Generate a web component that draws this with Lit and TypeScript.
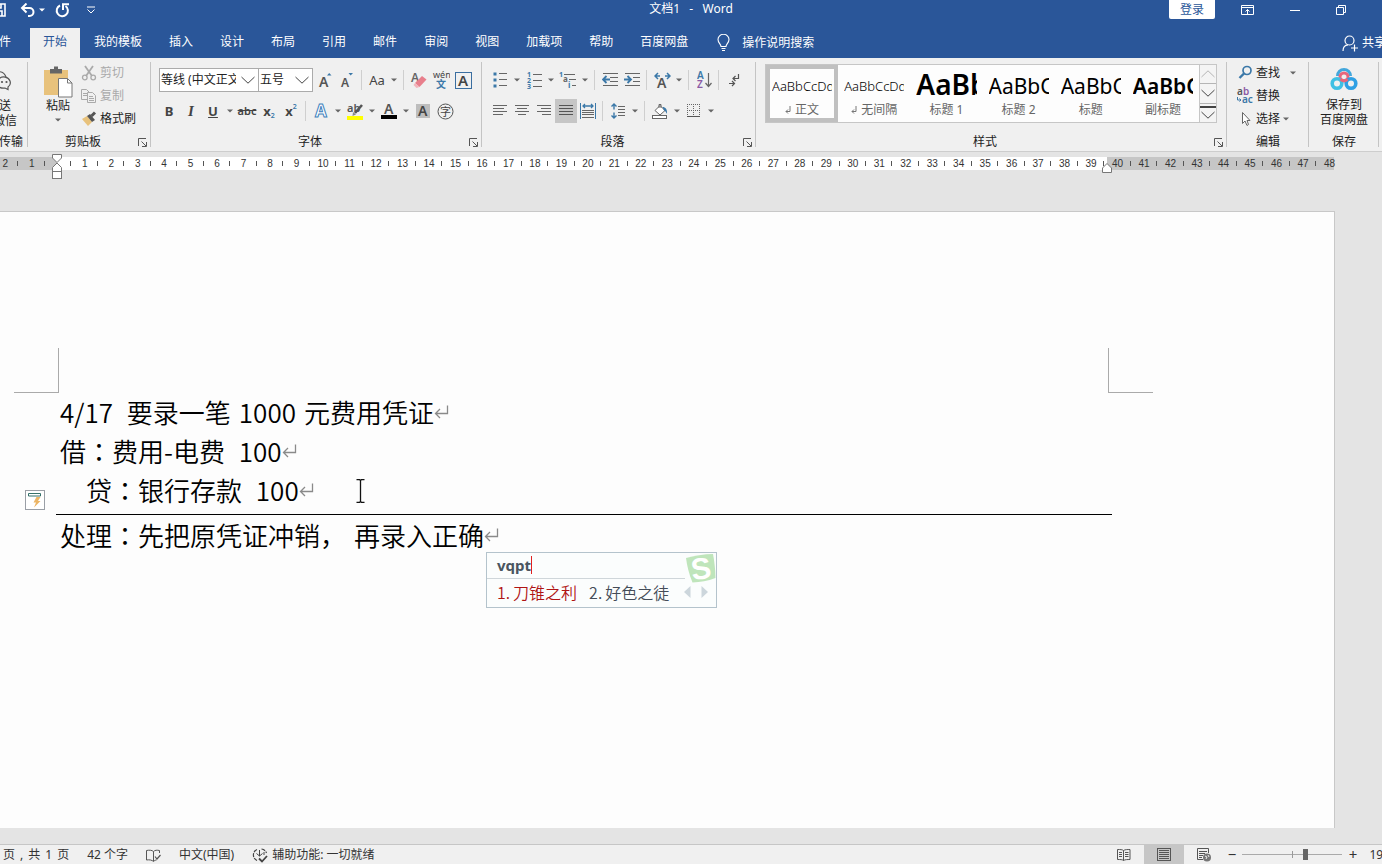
import { LitElement, html, css, svg, TemplateResult } from "lit";
import { customElement, state } from "lit/decorators.js";
import { classMap } from "lit/directives/class-map.js";

const icon = (w: number, h: number, body: unknown) =>
  html`<svg width=${w} height=${h} viewBox="0 0 ${w} ${h}" fill="none" aria-hidden="true">${body}</svg>`;

const G = "#666";
const B = "#3b78a8";

const lines = (rows: number[][], colour = G) =>
  rows.map(([x1, x2, y]) => svg`<path d="M${x1} ${y + 0.5}H${x2}" stroke=${colour}/>`);

const caretGlyph = icon(6, 4, svg`<path d="M0 0.5h6L3 3.5z" fill="#666"/>`);
const launcherGlyph = icon(9, 9, svg`<path d="M0.5 8V0.5H8M3.5 3.5L8 8M8.5 4v4.5H4" stroke="#555"/>`);
const returnMark = icon(15, 14, svg`<path d="M13.5 0.5V8.5H2M6 4L1.5 8.5L6 13" stroke="#8a8a8a" stroke-width="1.3"/>`);

const icons = {
  save: icon(14, 14, svg`<path d="M0 1h13v12H0M3 1v4h6V1M3 13V8h7v5" stroke="#fff" stroke-width="1.6"/>`),
  undo: icon(16, 14, svg`<path d="M2 5h7.5a4 4 0 0 1 0 8H8" stroke="#fff" stroke-width="2"/><path d="M6.500 0.500L2 5l4.500 4.500" stroke="#fff" stroke-width="2"/>`),
  caretWhite: icon(6, 4, svg`<path d="M0 0.500h6L3 3.500z" fill="#fff"/>`),
  redo: icon(15, 15, svg`<path d="M5 2.500A5.600 5.600 0 1 0 10.500 3" stroke="#fff" stroke-width="2"/><path d="M8 7V1.200h6" stroke="#fff" stroke-width="2"/>`),
  more: icon(8, 8, svg`<path d="M0 1h8" stroke="#fff"/><path d="M0.500 3.500L4 7L7.500 3.500" stroke="#fff"/>`),
  ribbonMode: icon(13, 10, svg`<path d="M0.500 0.500h12v9H0.500zM0.500 2.500h12M6.500 9V4.500M4.500 6.500l2-2l2 2" stroke="#fff"/>`),
  min: icon(10, 10, svg`<path d="M0 5.500h10" stroke="#fff"/>`),
  restore: icon(10, 10, svg`<path d="M0.500 2.500h7v7h-7zM2.500 2.500v-2h7v7h-2" stroke="#fff"/>`),
  bulb: icon(13, 18, svg`<path d="M4 12.500c0-2.500-3-3.500-3-7a5.500 5.200 0 0 1 11 0c0 3.500-3 4.500-3 7zM4.500 14.500h4M5 16.500h3" stroke="#fff" stroke-width="1.100"/>`),
  share: icon(16, 17, svg`<circle cx="7.500" cy="5.500" r="4.500" stroke="#fff" stroke-width="1.200"/><path d="M1 16c0-4 2-6 5-6.200M12.500 9.500v7M9 13h7" stroke="#fff" stroke-width="1.200"/>`),
  wechat: icon(24, 22, svg`<path d="M1 7c1-5 15-9 18 0" stroke="#555" stroke-width="1.200"/><path d="M12.500 8.500c3-3 9-1.500 10.500 2.500c1 3-0.500 5-2 6v2.500l-3-1.500c-4 0.500-7-1-7.500-4c-0.300-2 0.500-4 2-5.500z" stroke="#555" stroke-width="1.200"/><circle cx="15" cy="12" r="1.100" fill="#555"/><circle cx="19.500" cy="12" r="1.100" fill="#555"/>`),
  paste: icon(29, 32, svg`<rect x="0" y="4" width="24" height="25" fill="#e8c27c"/><path d="M6 3h4V0.500h4V3h4v4.500H6z" fill="#666"/><path d="M14.500 12.500h9l4.500 4.500v14H14.500z" fill="#fff" stroke="#777"/><path d="M23.500 12.500V17H28" stroke="#777"/>`),
  cut: icon(16, 16, svg`<path d="M4 1l7 10M12 1L5 11" stroke="#aaa" stroke-width="1.800"/><circle cx="3.800" cy="12.500" r="2.300" stroke="#aaa" stroke-width="1.300"/><circle cx="12.200" cy="12.500" r="2.300" stroke="#aaa" stroke-width="1.300"/>`),
  copy: icon(16, 16, svg`<path d="M0.500 1.500h5l3 3v7h-8zM2 5.500h4M2 7.500h4" stroke="#aaa"/><path d="M6.500 4.500h5l3 3v7h-8z" fill="#f0f0f0" stroke="#aaa"/><path d="M8 8.500h4M8 10.500h5M8 12.500h5" stroke="#aaa"/>`),
  painter: icon(16, 16, svg`<path d="M1 8l5-3l5 6l-4 4z" fill="#e8c27c"/><path d="M6 5l3-2l5 6l-3 2z" fill="#555"/><path d="M10.500 5L14 1.500" stroke="#555" stroke-width="3"/>`),
  grow: icon(16, 18, svg`<text x="2" y="16" font-size="14" font-weight="600" fill="#555">A</text><path d="M10 4.500h4.500L12.200 2z" fill=${B}/>`),
  shrink: icon(16, 18, svg`<text x="2" y="16" font-size="12" font-weight="600" fill="#555">A</text><path d="M9.500 2h4.500L11.700 4.500z" fill=${B}/>`),
  eraser: icon(18, 18, svg`<text x="1" y="11" font-size="12" font-weight="600" fill=${G}>A</text><path d="M5 12L12 5l4.500 3.500L9.500 16z" fill="#e87f8c"/><path d="M3.500 14l3 3l3-1L5 12z" fill="#f3b4bb"/>`),
  phonetic: icon(18, 18, svg`<text x="1" y="7" font-size="9" fill="#444">wén</text><text x="4" y="17" font-size="10" font-weight="700" fill=${B}>文</text>`),
  charBorder: icon(17, 17, svg`<rect x="0.500" y="0.500" width="16" height="16" stroke="#3a6ea0"/><text x="3" y="14" font-size="15" font-weight="600" fill="#444">A</text>`),
  textEffect: icon(16, 16, svg`<text x="2" y="14" font-size="17" font-weight="700" fill="#fff" stroke="#3f82bd" stroke-width="1">A</text>`),
  highlight: icon(18, 18, svg`<text x="1" y="10" font-size="11" font-weight="600" fill="#555">ab</text><path d="M16 3L9 11" stroke="#555" stroke-width="2.500"/><path d="M7 10l3 2.500L6.500 14z" fill="#888"/><rect x="1" y="14" width="16" height="4" fill="#ff0"/>`),
  fontColour: icon(16, 16, svg`<text x="3" y="11" font-size="14" font-weight="600" fill="#555">A</text><rect y="12" width="16" height="4" fill="#000"/>`),
  shade: icon(14, 14, svg`<rect width="14" height="14" fill="#bdbdbd"/><text x="2" y="12" font-size="14" font-weight="600" fill="#444">A</text>`),
  enclose: icon(17, 17, svg`<circle cx="8.500" cy="8.500" r="7.500" stroke="#555"/><text x="3" y="12.500" font-size="11" fill="#444">字</text>`),
  bullets: icon(15, 16, svg`${[2, 8, 14].map((y) => svg`<rect x="0.500" y=${y - 1.5} width="3" height="3" fill=${B}/>`)}${lines([[6, 14, 1], [6, 14, 7], [6, 14, 13]])}`),
  numbering: icon(15, 18, svg`${[1, 2, 3].map((n) => svg`<text x="0" y=${n * 6} font-size="7" font-weight="700" fill=${B}>${n}</text>`)}${lines([[6, 15, 3], [6, 15, 9], [6, 15, 15]])}`),
  multilevel: icon(18, 18, svg`<text x="0" y="6" font-size="7" font-weight="700" fill=${B}>1</text><text x="4" y="11" font-size="8" font-weight="700" fill=${G}>a</text><text x="9" y="17" font-size="8" font-weight="700" fill=${B}>i</text>${lines([[5, 16, 3], [10, 17, 8], [13, 17, 14]])}`),
  outdent: icon(17, 14, svg`${lines([[1, 16, 0], [8, 16, 4], [8, 16, 8], [1, 16, 12]])}<path d="M1 6.500h7M4.500 3L1 6.500L4.500 10" stroke=${B} stroke-width="1.800"/>`),
  indent: icon(17, 14, svg`${lines([[1, 16, 0], [9, 16, 4], [9, 16, 8], [1, 16, 12]])}<path d="M0 6.500h7M3.500 3L7 6.500L3.500 10" stroke=${B} stroke-width="1.800"/>`),
  charScale: icon(17, 17, svg`<text x="3" y="16" font-size="14" font-weight="600" fill="#555">A</text><path d="M1 4h5M11 4h5M4 1L1 4l3 3M13 1l3 3l-3 3" stroke=${B} stroke-width="1.500"/>`),
  sort: icon(15, 18, svg`<text x="0" y="8" font-size="10" font-weight="600" fill=${B}>A</text><text x="0" y="17" font-size="10" font-weight="600" fill="#8a5aa5">Z</text><path d="M11.500 2v13M8.500 12l3 3.500l3-3.500" stroke=${G} stroke-width="1.200"/>`),
  marks: icon(12, 13, svg`<path d="M10.500 0v4.500H5M7.500 2L5 4.500L7.500 7M1 9.500h5M4 7l2.500 2.500L4 12" stroke="#555" stroke-width="1.200"/>`),
  alignLeft: icon(15, 12, lines([[0, 14, 0], [0, 11, 3], [0, 14, 6], [0, 10, 9]])),
  alignCentre: icon(15, 12, lines([[0, 14, 0], [2, 12, 3], [0, 14, 6], [3, 11, 9]])),
  alignRight: icon(15, 12, lines([[0, 14, 0], [4, 14, 3], [0, 14, 6], [5, 14, 9]])),
  justify: icon(15, 12, lines([[0, 14, 0], [0, 14, 3], [0, 14, 6], [0, 14, 9]], "#555")),
  distribute: icon(16, 16, svg`<path d="M0.500 0v16M15.500 0v16" stroke=${B}/><path d="M3 3h10M5 1L3 3l2 2M11 1l2 2l-2 2" stroke=${B} stroke-width="1.300"/>${lines([[2, 14, 7], [2, 14, 9], [2, 14, 11], [2, 14, 14]])}`),
  spacing: icon(15, 16, svg`<path d="M3 1v5.500M3 9.500V15M0.500 3.500L3 1l2.500 2.500M0.500 12.500L3 15l2.500-2.500" stroke=${B} stroke-width="1.400"/>${lines([[7, 14, 3], [7, 14, 6], [7, 14, 9], [7, 14, 12]])}`),
  fill: icon(18, 17, svg`<path d="M4 7.500L9 2.500l5 5l-5 4.500z" fill="#fff" stroke=${G}/><path d="M8 5V1.500h2V5" stroke=${G}/><path d="M11.500 4c3 0 5 2.500 4.500 7c-1-2-1.500-3-3-3.500z" fill=${B}/><rect x="1.500" y="12.500" width="14" height="3" fill="#fff" stroke=${G}/>`),
  borders: icon(14, 14, svg`<path d="M0.500 0v12M6.500 0v12M12.500 0v12M0 0.500h13M0 6.500h13" stroke="#666" stroke-dasharray="1 1"/><path d="M0 12.500h13" stroke="#555"/>`),
  find: icon(15, 15, svg`<circle cx="9" cy="5.500" r="4" stroke=${B} stroke-width="1.700"/><path d="M6 8.500L1.500 13" stroke=${B} stroke-width="2.400"/>`),
  replace: icon(18, 17, svg`<text x="1" y="8" font-size="10" font-weight="600" fill="#555">a</text><text x="7" y="8" font-size="10" font-weight="600" fill="#8a5aa5">b</text><text x="6" y="16" font-size="10" font-weight="600" fill=${B}>ac</text><path d="M1.500 10v3H5M3.500 11.500L5 13l-1.500 1.500" stroke=${B}/>`),
  pointer: icon(15, 16, svg`<path d="M4.500 1.500v11l2.500-2.500l2 4.500l1.500-1l-1.500-4H12z" fill="#fff" stroke="#666"/>`),
  netdisk: icon(28, 24, svg`<path d="M7.500 9a6.500 6.500 0 0 1 13 0" stroke="#43a7dc" stroke-width="3"/><circle cx="14" cy="10" r="4" stroke="#e8677c" stroke-width="3"/><circle cx="7" cy="16.500" r="4.800" stroke="#3fc0e4" stroke-width="3.600"/><circle cx="21" cy="16.500" r="4.800" stroke="#2fa0e4" stroke-width="3.600"/><path d="M10.500 12a4.500 4.500 0 0 0 7 0" stroke="#e8677c" stroke-width="3"/>`),
  chevronUp: icon(14, 8, svg`<path d="M0.500 7L7 0.800L13.500 7" stroke="#b5b5b5"/>`),
  chevronDown: icon(14, 8, svg`<path d="M0.500 1L7 7.200L13.500 1" stroke="#444"/>`),
  chevronMore: icon(16, 14, svg`<path d="M0 1h16" stroke="#444" stroke-width="2"/><path d="M1.500 6L8 12.200L14.500 6" stroke="#444"/>`),
  smallReturn: icon(6, 8, svg`<path d="M5 0v5.500H1M3 3.500L1 5.500L3 7.500" stroke="#777"/>`),
  proof: icon(15, 13, svg`<path d="M7.500 12V2.500C6 1 3 1 0.500 1.500v9.500c3-0.500 5.500 0 7 1.500c1-1 2-1.500 3-1.500M7.500 2.500C9 1 11 1 13.500 1.500V4" stroke="#555"/><path d="M9 7.500l2 2.500l3.500-4" stroke="#555" stroke-width="1.200"/>`),
  access: icon(16, 15, svg`<path d="M5 1.500A6 6 0 0 0 5 12.500M9.500 1a6 6 0 0 1 5 4" stroke="#444" stroke-width="1.200" stroke-dasharray="4 1"/><path d="M7.500 2v6M4.500 5.500l3 2.500l3-2.500M12 4v3" stroke="#444"/><path d="M7 10.500l3 3L15 8" stroke="#444" stroke-width="1.800"/>`),
  readMode: icon(14, 12, svg`<path d="M0.500 0.500C3 0.500 5.500 0.500 6.500 1.500C8 0.500 10.500 0.500 13 0.500v10c-2.500 0-5 0-6.500 1C5.500 10.500 3 10.500 0.500 10.500zM6.500 1.500v10M2 3.500h3M2 5.500h3M2 7.500h3M8 3.500h3.500M8 5.500h3.500M8 7.500h3.500" stroke="#555"/>`),
  printView: icon(15, 13, svg`<rect x="0.500" y="0.500" width="13" height="12" stroke="#555"/>${lines([[2, 12, 2], [2, 12, 4], [2, 12, 6], [2, 12, 8], [2, 12, 10]], "#555")}`),
  webView: icon(15, 14, svg`<path d="M11.500 5V0.500H0.500v11H6M2 3.500h8M2 5.500h6M2 7.500h4M2 9.500h3" stroke="#555"/><circle cx="10" cy="9.500" r="4" fill="#777"/><path d="M8 8l2 1l-1 2M11 7l1 2" stroke="#eee"/>`),
  autoCorrect: icon(20, 20, svg`<rect x="0.500" y="0.500" width="19" height="19" fill="#fff" stroke="#9a9fa6"/><path d="M3.500 6V3.500h12V6H3.500" stroke="#35716a"/><path d="M11.500 7h4l-2.500 4h2.500L9 17.500l2-5H8.500z" fill="#ecb565"/>`),
  iBeam: icon(9, 24, svg`<path d="M0.500 0.500h3l1 1l1-1h3M0.500 23.500h3l1-1l1 1h3M4.500 1v22" stroke="#111" stroke-width="1.300"/>`),
  sogou: icon(32, 31, svg`<path d="M2 5C10 3 20 1 29 1c1.500 8 2.300 15 2.500 24c-8 3-15 4-23 4.500C5 21 3 13 2 5z" fill="#bfe5bb"/><text x="7" y="26" font-size="30" font-weight="700" font-family="Liberation Sans" fill="#fff" transform="rotate(-8 16 16)">S</text>`),
  prev: icon(7, 12, svg`<path d="M6.500 0v12L0 6z" fill="#ccd6dc"/>`),
  next: icon(7, 12, svg`<path d="M0.500 0v12L7 6z" fill="#ccd6dc"/>`),
  indentMarks: icon(10, 26, svg`<path d="M0.500 0.500h9v3.500l-4.500 4.500L0.500 4zM0.500 17.500V13.500L5 9l4.500 4.500v4z" fill="#fff" stroke="#777"/><rect x="0.500" y="17.500" width="9" height="7" fill="#fff" stroke="#777"/>`),
  rightMark: icon(10, 10, svg`<path d="M0.500 9.500V5L5 0.500L9.500 5v4.500z" fill="#fff" stroke="#777"/>`),
};

const base = css`
  * { box-sizing: border-box; }
  svg { display: block; flex: none; }
  button, select, input {
    font: inherit; color: inherit; border: 0; background: none; padding: 0; margin: 0;
  }
  button { display: flex; align-items: center; justify-content: center; white-space: nowrap; }
`;

@customElement("title-bar")
class TitleBar extends LitElement {
  static styles = [base, css`
    :host { display: block; background: #2a5699; color: #fff; }
    .bar { display: grid; grid-template-columns: 1fr auto 1fr; height: 28px; }
    .tools { display: flex; align-items: center; height: 20px; margin-left: -8px; }
    .undo { margin-left: 14px; }
    .caret { margin-left: 3px; }
    .redo { margin-left: 10px; }
    .more { margin-left: 17px; }
    .title { line-height: 18px; white-space: pre; }
    .right { display: flex; justify-content: flex-end; align-items: center; height: 19px; padding-right: 36px; }
    .login { background: #fff; color: #2a5699; width: 46px; height: 19px; border-radius: 0 0 2px 2px; margin-right: 26px; }
    .win { margin-right: 36px; }
    .win:last-child { margin-right: 0; }
  `];
  render() {
    return html`<header class="bar">
      <div class="tools">
        <button aria-label="保存">${icons.save}</button>
        <button class="undo" aria-label="撤消">${icons.undo}</button>
        <button class="caret" aria-label="撤消列表">${icons.caretWhite}</button>
        <button class="redo" aria-label="重复">${icons.redo}</button>
        <button class="more" aria-label="自定义">${icons.more}</button>
      </div>
      <div class="title">文档1   -   Word</div>
      <div class="right">
        <button class="login">登录</button>
        <button class="win" aria-label="功能区显示选项">${icons.ribbonMode}</button>
        <button class="win" aria-label="最小化">${icons.min}</button>
        <button class="win" aria-label="还原">${icons.restore}</button>
      </div>
    </header>`;
  }
}

@customElement("tab-strip")
class TabStrip extends LitElement {
  @state() active = "开始";
  tabs = ["文件", "开始", "我的模板", "插入", "设计", "布局", "引用", "邮件", "审阅", "视图", "加载项", "帮助", "百度网盘"];
  static styles = [base, css`
    :host { display: block; background: #2a5699; color: #fff; overflow: hidden; }
    .strip { display: flex; height: 30px; gap: 1px; margin-left: -26px; }
    .tab { padding: 0 13px; height: 30px; padding-bottom: 2px; }
    .file { margin-right: 5px; }
    .on { background: #f0f0f0; color: #2a5699; }
    .tell { margin-left: 15px; gap: 12px; }
    .share { margin-left: auto; margin-right: -4px; gap: 4px; }
  `];
  render() {
    return html`<nav class="strip">
      ${this.tabs.map((t, i) => html`<button
        class=${classMap({ tab: true, file: i === 0, on: t === this.active })}
        @click=${() => (this.active = t)}>${t}</button>`)}
      <button class="tell">${icons.bulb}操作说明搜索</button>
      <button class="share">${icons.share}共享</button>
    </nav>`;
  }
}

@customElement("ribbon-bar")
class RibbonBar extends LitElement {
  samples = [
    { text: "AaBbCcDd", kind: "body", name: "正文", mark: true },
    { text: "AaBbCcDd", kind: "body", name: "无间隔", mark: true },
    { text: "AaBb", kind: "h1", name: "标题 1", mark: false },
    { text: "AaBbC", kind: "h2", name: "标题 2", mark: false },
    { text: "AaBbC", kind: "h2", name: "标题", mark: false },
    { text: "AaBbC", kind: "sub", name: "副标题", mark: false },
  ];
  static styles = [base, css`
    :host { display: block; background: #f0f0f0; border-bottom: 1px solid #cdcdcd; overflow: hidden; color: #222; }
    .ribbon { display: flex; height: 93px; padding-right: 3px; }
    .group { display: flex; flex-direction: column; position: relative; flex: none; }
    .group::after { content: ""; position: absolute; right: 0; top: 4px; bottom: 4px; width: 1px; background: #c4c4c4; }
    .body { flex: 1; padding-top: 3px; }
    .foot { display: flex; height: 18px; align-items: center; padding-right: 4px; }
    .name { flex: 1; text-align: center; line-height: 18px; white-space: nowrap; }
    .transfer { width: 58px; margin-left: -30px; }
    .clip { width: 123px; }
    .font { width: 331px; }
    .para { width: 274px; }
    .gallerygroup { flex: 1; min-width: 0; }
    .edit { width: 82px; }
    .disk { width: 70px; }
    .bare { padding: 0; }

    .stack { flex-direction: column; line-height: 15px; width: 100%; }
    .wechat { padding-top: 9px; }
    .wechat svg { margin-bottom: 6px; }
    .clipbody { display: flex; padding-left: 15px; }
    .paste { flex-direction: column; justify-content: flex-start; padding-top: 5px; width: 30px; line-height: 15px; }
    .paste .caption { margin: 0 0 5px; }
    .list { display: flex; flex-direction: column; }
    .cliplist { margin-left: 8px; }
    .row { height: 23px; gap: 3px; justify-content: flex-start; }
    .off { color: #aaa; }
    .gapcaret { margin-left: 7px; }
    .editlist { padding-left: 10px; }
    .editicon { width: 16px; display: flex; justify-content: center; }

    .tools { display: flex; align-items: center; height: 34px; padding-left: 7px; }
    .tools.first { padding-left: 8px; height: 33px; padding-top: 5px; }
    .tools.first.plain { padding-left: 7px; }
    .tool { width: 22px; height: 24px; flex: none; color: #444; }
    .tool.on { background: #c6c6c6; }
    .caret { width: 12px; height: 22px; flex: none; }
    .sep { width: 1px; height: 20px; background: #cfcfcf; margin: 0 4px 0 3px; flex: none; }
    .combo { display: grid; height: 24px; flex: none; }
    .combo > * { grid-area: 1 / 1; }
    .combo svg { justify-self: end; align-self: center; margin-right: 4px; pointer-events: none; }
    .combo select { appearance: none; background: #fff; border: 1px solid #ababab; height: 24px; padding: 0 22px 0 1px; border-radius: 0; overflow: hidden; text-overflow: clip; width: 100%; }
    .family { width: 100px; }
    .size { width: 55px; margin-left: -1px; margin-right: 1px; }
    .glyph { font-weight: 700; font-size: 13px; }
    .italic { font-style: italic; font-family: "Liberation Serif", serif; font-size: 15px; }
    .under { text-decoration: underline; }
    .strike { text-decoration: line-through; font-size: 11px; font-weight: 600; }
    .small { font-size: 7px; font-weight: 600; line-height: 10px; color: #3b78a8; }
    .low { align-self: flex-end; margin-bottom: 2px; }
    .high { align-self: flex-start; margin-top: 3px; }
    .case { font-size: 13px; }

    .gallery { display: flex; margin: 3px 10px 0 9px; border: 1px solid #c6c6c6; height: 59px; background: #fdfdfd; }
    .style { flex: 1; min-width: 0; flex-direction: column; padding: 0 6px; border: 0; overflow: hidden; justify-content: flex-start; }
    .picked { outline: 4px solid #c0c0c0; outline-offset: -4px; }
    .sample { width: 100%; height: 36px; line-height: 42px; overflow: hidden; text-align: left; color: #000; }
    .body-s { font-size: 13px; font-weight: 300; }
    .h1-s { font-size: 28px; font-weight: 600; line-height: 38px; }
    .h2-s { font-size: 21px; font-weight: 400; }
    .sub-s { font-size: 21px; font-weight: 600; }
    .label { display: flex; gap: 4px; align-items: center; line-height: 18px; color: #666; }
    .scroll { display: flex; flex-direction: column; width: 17px; border-left: 1px solid #c6c6c6; flex: none; }
    .scroll button { flex: 1; background: #f4f4f4; border-bottom: 1px solid #b5b5b5; }
    .scroll button:last-child { border-bottom: 0; }
    .diskbtn { padding-top: 6px; }
    .diskbtn svg { margin-bottom: 6px; }
  `];
  tool(g: unknown, label: string, extra = {}): TemplateResult {
    return html`<button class=${classMap({ tool: true, ...extra })} aria-label=${label}>${g}</button>`;
  }
  caret(label: string) {
    return html`<button class="caret" aria-label="${label}选项">${caretGlyph}</button>`;
  }
  foot(name: string, launcher = true) {
    return html`<div class=${classMap({ foot: true, bare: !launcher })}>
      <span class="name">${name}</span>
      ${launcher ? html`<button aria-label="${name}设置">${launcherGlyph}</button>` : ""}
    </div>`;
  }
  render() {
    const sep = html`<span class="sep"></span>`;
    return html`<div class="ribbon">
      <section class="group transfer">
        <div class="body"><button class="stack wechat">${icons.wechat}<span>发送</span><span>到微信</span></button></div>
        ${this.foot("微信传输", false)}
      </section>

      <section class="group clip">
        <div class="body clipbody">
          <button class="paste">${icons.paste}<span class="caption">粘贴</span>${caretGlyph}</button>
          <div class="list cliplist">
            <button class="row off">${icons.cut}剪切</button>
            <button class="row off">${icons.copy}复制</button>
            <button class="row">${icons.painter}格式刷</button>
          </div>
        </div>
        ${this.foot("剪贴板")}
      </section>

      <section class="group font">
        <div class="body">
          <div class="tools first">
            <label class="combo family"><select aria-label="字体"><option>等线 (中文正文)</option></select>${icons.chevronDown}</label>
            <label class="combo size"><select aria-label="字号"><option>五号</option></select>${icons.chevronDown}</label>
            ${this.tool(icons.grow, "增大字号")}
            ${this.tool(icons.shrink, "减小字号")}
            ${sep}
            ${this.tool(html`<span class="case">Aa</span>`, "更改大小写")}${this.caret("大小写")}
            ${sep}
            ${this.tool(icons.eraser, "清除格式")}${this.tool(icons.phonetic, "拼音指南")}${this.tool(icons.charBorder, "字符边框")}
          </div>
          <div class="tools">
            ${this.tool(html`<span class="glyph">B</span>`, "加粗")}
            ${this.tool(html`<span class="glyph italic">I</span>`, "倾斜")}
            ${this.tool(html`<span class="glyph under">U</span>`, "下划线")}${this.caret("下划线")}
            ${this.tool(html`<span class="strike">abc</span>`, "删除线")}
            ${this.tool(html`<span class="glyph">x</span><span class="small low">2</span>`, "下标")}
            ${this.tool(html`<span class="glyph">x</span><span class="small high">2</span>`, "上标")}
            ${sep}
            ${this.tool(icons.textEffect, "文本效果")}${this.caret("文本效果")}
            ${this.tool(icons.highlight, "突出显示")}${this.caret("突出显示")}
            ${this.tool(icons.fontColour, "字体颜色")}${this.caret("字体颜色")}
            ${this.tool(icons.shade, "字符底纹")}${this.tool(icons.enclose, "带圈字符")}
          </div>
        </div>
        ${this.foot("字体")}
      </section>

      <section class="group para">
        <div class="body">
          <div class="tools first plain">
            ${this.tool(icons.bullets, "项目符号")}${this.caret("项目符号")}
            ${this.tool(icons.numbering, "编号")}${this.caret("编号")}
            ${this.tool(icons.multilevel, "多级列表")}${this.caret("多级列表")}
            ${sep}${this.tool(icons.outdent, "减少缩进")}${this.tool(icons.indent, "增加缩进")}
            ${sep}${this.tool(icons.charScale, "中文版式")}${this.caret("中文版式")}
            ${sep}${this.tool(icons.sort, "排序")}${sep}${this.tool(icons.marks, "显示编辑标记")}
          </div>
          <div class="tools">
            ${this.tool(icons.alignLeft, "左对齐")}${this.tool(icons.alignCentre, "居中")}
            ${this.tool(icons.alignRight, "右对齐")}${this.tool(icons.justify, "两端对齐", { on: true })}
            ${this.tool(icons.distribute, "分散对齐")}
            ${sep}${this.tool(icons.spacing, "行距")}${this.caret("行距")}
            ${sep}${this.tool(icons.fill, "底纹")}${this.caret("底纹")}
            ${this.tool(icons.borders, "边框")}${this.caret("边框")}
          </div>
        </div>
        ${this.foot("段落")}
      </section>

      <section class="group gallerygroup">
        <div class="body">
          <div class="gallery">
            ${this.samples.map((s, i) => html`<button class=${classMap({ style: true, picked: i === 0 })}>
              <span class="sample ${s.kind}-s">${s.text}</span>
              <span class="label">${s.mark ? icons.smallReturn : ""}${s.name}</span>
            </button>`)}
            <div class="scroll">
              <button aria-label="上一行">${icons.chevronUp}</button>
              <button aria-label="下一行">${icons.chevronDown}</button>
              <button aria-label="其他">${icons.chevronMore}</button>
            </div>
          </div>
        </div>
        ${this.foot("样式")}
      </section>

      <section class="group edit">
        <div class="body list editlist">
          <button class="row"><span class="editicon">${icons.find}</span>查找<span class="gapcaret">${caretGlyph}</span></button>
          <button class="row"><span class="editicon">${icons.replace}</span>替换</button>
          <button class="row"><span class="editicon">${icons.pointer}</span>选择${caretGlyph}</button>
        </div>
        ${this.foot("编辑", false)}
      </section>

      <section class="group disk">
        <div class="body"><button class="stack diskbtn">${icons.netdisk}<span>保存到</span><span>百度网盘</span></button></div>
        ${this.foot("保存", false)}
      </section>
    </div>`;
  }
}

@customElement("ruler-strip")
class RulerStrip extends LitElement {
  static styles = [base, css`
    :host { display: block; position: relative; height: 13px; margin-right: 48px;
      background: linear-gradient(to right, #c6c6c6 57px, #fff 57px, #fff calc(100% - 227px), #c6c6c6 calc(100% - 227px)); }
    .scale { display: flex; margin: 0 -9px 0 -8px; height: 13px; }
    .cell { flex: 1; display: flex; align-items: center; justify-content: center; position: relative;
      font: 10px/13px "Liberation Sans", Arial, sans-serif; color: #333; }
    .cell::after { content: ""; position: absolute; right: 0; top: 4px; width: 1px; height: 5px; background: #555; }
    .cell:last-child::after { display: none; }
    .left { position: absolute; left: 52px; top: -3px; }
    .right { position: absolute; right: 222px; top: 6px; }
  `];
  render() {
    const marks = Array.from({ length: 51 }, (_, i) => Math.abs(i - 2));
    return html`<div class="scale">${marks.map((n) => html`<span class="cell">${n || ""}</span>`)}</div>
      <span class="left">${icons.indentMarks}</span><span class="right">${icons.rightMark}</span>`;
  }
}

@customElement("ime-panel")
class ImePanel extends LitElement {
  static styles = [base, css`
    :host { display: block; width: 231px; background: #fbfdfd; border: 1px solid #b4c3cc; color: #4a5560; }
    .typed { display: flex; align-items: center; height: 26px; margin: 0 31px 0 0; padding: 0 0 2px 10px; border-bottom: 1px solid #cfd6da; }
    .code { font-size: 15px; font-weight: 700; line-height: 20px; }
    .bar { width: 1px; height: 18px; flex: none; background: #e02020; }
    .cands { display: flex; align-items: center; height: 28px; padding: 0 8px 2px 10px; font-size: 16px; font-weight: 350; font-family: "Noto Sans CJK SC", sans-serif; }
    .cand { gap: 3px; margin-right: 12px; color: #444c58; }
    .first { color: #b01414; }
    .prev { margin-left: auto; margin-right: 10px; }
    .logo { position: absolute; right: 0; top: 0; }
  `];
  render() {
    return html`<div class="typed"><span class="code">vqpt</span><span class="bar"></span></div>
      <div class="cands">
        <button class="cand first"><span>1.</span><span>刀锥之利</span></button>
        <button class="cand"><span>2.</span><span>好色之徒</span></button>
        <button class="prev" aria-label="上一页">${icons.prev}</button>
        <button aria-label="下一页">${icons.next}</button>
      </div>
      <span class="logo">${icons.sogou}</span>`;
  }
}

@customElement("doc-canvas")
class DocCanvas extends LitElement {
  paragraphs = [
    { runs: ["4/17", " 要录一笔", "1000", "元费用凭证"], cls: "" },
    { lead: "借", runs: ["费用-电费", " 100"], cls: "" },
    { lead: "贷", runs: ["银行存款", " 100"], cls: "ruled" },
    { lead: "处理", runs: ["先把原凭证冲销，", "再录入正确"], cls: "" },
  ] as { lead?: string; runs: string[]; cls: string }[];
  static styles = [base, css`
    :host { display: flex; flex-direction: column; background: #e4e4e4; padding-top: 5px; min-height: 0; overflow: hidden; }
    .page { position: relative; flex: 1; margin: 41px 47px 16px 0; padding-top: 136px; background: #fdfdfd;
      border: 1px solid #c8c8c8; border-left: 0; border-bottom: 0; }
    .crops { display: flex; justify-content: space-between; margin: 0 181px 0 14px; }
    .crop { width: 45px; height: 45px; border-bottom: 1px solid #aaa; }
    .tl { border-right: 1px solid #aaa; }
    .tr { border-left: 1px solid #aaa; }
    .text { margin: -1px 226px 0 60px; font-size: 26px; font-weight: 350; color: #000;
      font-family: "Noto Sans CJK SC", sans-serif; }
    .line { display: flex; align-items: center; margin: 0; height: 39px; line-height: 39px; white-space: pre; }
    .run + .run { margin-left: 8px; }
    .colon { font-family: "Noto Sans CJK TC", "Noto Sans CJK SC", sans-serif; }
    .ruled { margin: 0 -4px; padding: 0 0 5px 30px; height: 45px; border-bottom: 1px solid #000; }
    .auto { position: absolute; left: 25px; top: 278px; }
    .ibeam { position: absolute; left: 356px; top: 267px; }
    .ime { position: absolute; left: 486px; top: 340px; }
  `];
  render() {
    return html`<ruler-strip></ruler-strip>
      <main class="page">
        <div class="crops"><span class="crop tl"></span><span class="crop tr"></span></div>
        <article class="text">
          ${this.paragraphs.map((p) => html`<p class="line ${p.cls}">${p.lead
            ? html`<span>${p.lead}</span><span class="colon" lang="zh-TW">：</span>` : ""}${p.runs.map(
            (r) => html`<span class="run">${r}</span>`)}${returnMark}</p>`)}
        </article>
        <button class="auto" aria-label="自动更正选项">${icons.autoCorrect}</button>
        <span class="ibeam">${icons.iBeam}</span>
        <ime-panel class="ime"></ime-panel>
      </main>`;
  }
}

@customElement("status-bar")
class StatusBar extends LitElement {
  static styles = [base, css`
    :host { display: block; background: #f0f0f0; border-top: 1px solid #c6c6c6; color: #333; overflow: hidden; }
    .bar { display: flex; align-items: center; height: 19px; padding: 0 0 0 3px; white-space: pre; }
    .item { margin-right: 18px; gap: 4px; padding-top: 1px; }
    .pages { gap: 5px; }
    .view { width: 40px; height: 20px; }
    .on { background: #c6c6c6; }
    .spring { flex: 1; }
    .sign { width: 15px; font-size: 15px; line-height: 19px; color: #333; }
    .zoom { appearance: none; width: 100px; height: 19px; margin: 0 3px;
      background: linear-gradient(#999, #999) 50px 50% / 1px 7px no-repeat, linear-gradient(#aaa, #aaa) 0 50% / 100% 1px no-repeat; }
    .zoom::-webkit-slider-thumb { appearance: none; width: 5px; height: 11px; background: #666; }
    .pct { margin: 0 -18px 0 9px; padding-top: 1px; }
  `];
  render() {
    return html`<footer class="bar">
      <button class="item pages"><span>页</span><span>,</span><span>共</span><span>1</span><span>页</span></button>
      <button class="item">42 个字</button>
      <button class="item" aria-label="校对">${icons.proof}</button>
      <button class="item">中文(中国)</button>
      <button class="item">${icons.access}辅助功能: 一切就绪</button>
      <span class="spring"></span>
      <button class="view" aria-label="阅读视图">${icons.readMode}</button>
      <button class="view on" aria-label="页面视图">${icons.printView}</button>
      <button class="view" aria-label="Web 版式视图">${icons.webView}</button>
      <button class="sign" aria-label="缩小">−</button>
      <input class="zoom" type="range" min="0" max="100" .value=${"64"} aria-label="缩放" />
      <button class="sign" aria-label="放大">+</button>
      <button class="pct">190%</button>
    </footer>`;
  }
}

@customElement("app-root")
class AppRoot extends LitElement {
  static styles = css`
    :host { display: flex; flex-direction: column; height: 100vh; overflow: hidden;
      font: 12px/16px "Noto Sans", "Noto Sans CJK SC", sans-serif; }
    doc-canvas { flex: 1; }
  `;
  render() {
    return html`<title-bar></title-bar><tab-strip></tab-strip><ribbon-bar></ribbon-bar>
      <doc-canvas></doc-canvas><status-bar></status-bar>`;
  }
}
